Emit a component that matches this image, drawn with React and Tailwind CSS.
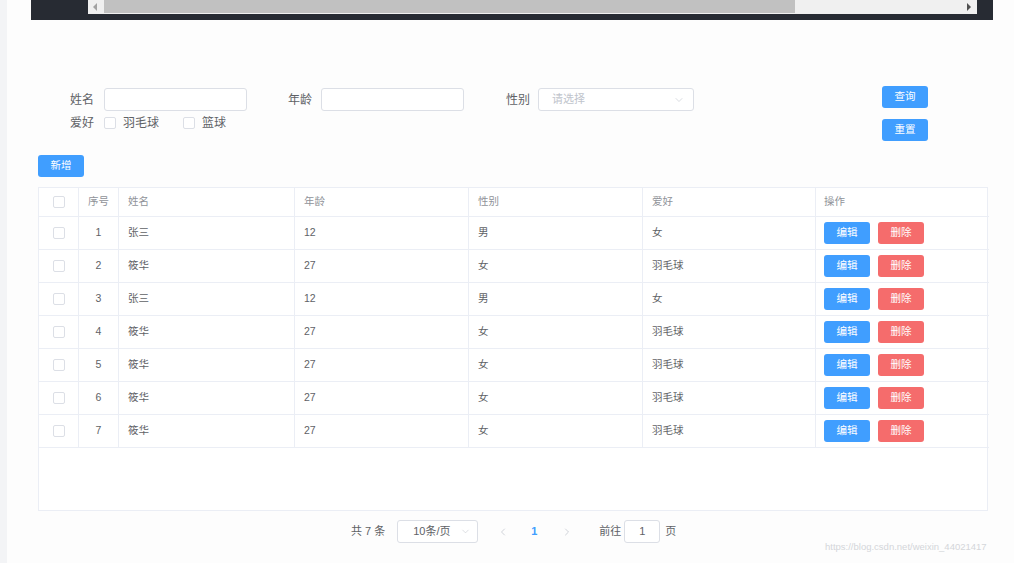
import React from "react";
import { ChevronDown, ChevronLeft, ChevronRight } from "lucide-react";

const FONT = { fontFamily: '"Liberation Sans", "Noto Sans CJK SC", sans-serif' };

const rows = [
  { id: 1, name: "张三", age: 12, sex: "男", hobby: "女" },
  { id: 2, name: "筱华", age: 27, sex: "女", hobby: "羽毛球" },
  { id: 3, name: "张三", age: 12, sex: "男", hobby: "女" },
  { id: 4, name: "筱华", age: 27, sex: "女", hobby: "羽毛球" },
  { id: 5, name: "筱华", age: 27, sex: "女", hobby: "羽毛球" },
  { id: 6, name: "筱华", age: 27, sex: "女", hobby: "羽毛球" },
  { id: 7, name: "筱华", age: 27, sex: "女", hobby: "羽毛球" },
];

function Box() {
  return <span className="block w-[12px] h-[12px] border border-[#dcdfe6] rounded-[2px] bg-white" />;
}

const GRID = "grid grid-cols-[40px_40px_176px_174px_174px_173px_173px]";

export default function App() {
  return (
    <div className="w-[1014px] h-[563px] bg-[#fdfdfd] flex overflow-hidden" style={FONT}>
      <div className="w-[7px] h-full bg-[#f3f4f6]" />
      <div className="flex-1 relative">
        {/* top dark bar with scrollbar */}
        <div className="ml-[24px] w-[962px] h-[20px] bg-[#272b33]">
          <div className="ml-[57px] w-[889px] h-[14px] bg-[#f0f0f0] flex items-center relative">
            <span className="absolute left-[5px] top-[3px] w-0 h-0 border-y-[4px] border-y-transparent border-r-[4px] border-r-[#a3a3a3]" />
            <div className="ml-[16px] w-[691px] h-[13px] self-start bg-[#c1c1c1]" />
            <span className="absolute right-[6px] top-[3px] w-0 h-0 border-y-[4px] border-y-transparent border-l-[4px] border-l-[#505050]" />
          </div>
        </div>

        {/* search form */}
        <div className="flex items-start mt-[66px]">
          <div className="pl-[63px] pt-[2px]">
            <div className="flex items-center h-[23px] text-[12px] text-[#606266]">
              <span className="w-[34px]">姓名</span>
              <div className="w-[143px] h-[23px] border border-[#dcdfe6] rounded-[3px] bg-white" />
              <span className="ml-[41px] w-[33px]">年龄</span>
              <div className="w-[143px] h-[23px] border border-[#dcdfe6] rounded-[3px] bg-white" />
              <span className="ml-[42px] w-[32px]">性别</span>
              <div className="w-[156px] h-[23px] border border-[#dcdfe6] rounded-[3px] bg-white flex items-center justify-between pl-[13px] pr-[8px]">
                <span className="text-[11px] text-[#c0c4cc]">请选择</span>
                <ChevronDown size={12} strokeWidth={1.2} color="#c0c4cc" />
              </div>
            </div>
            <div className="flex items-center h-[14px] mt-[5px] text-[12px] text-[#606266]">
              <span className="w-[34px]">爱好</span>
              <Box />
              <span className="ml-[7px]">羽毛球</span>
              <span className="ml-[24px]"><Box /></span>
              <span className="ml-[7px]">篮球</span>
            </div>
          </div>
          <div className="ml-[188px] flex flex-col gap-[11px]">
            <button className="w-[46px] h-[22px] bg-[#409eff] text-white text-[10.5px] rounded-[3px]">查询</button>
            <button className="w-[46px] h-[22px] bg-[#409eff] text-white text-[10.5px] rounded-[3px]">重置</button>
          </div>
        </div>

        {/* add button */}
        <div className="flex ml-[31px] mt-[14px]">
          <button className="w-[46px] h-[22px] bg-[#409eff] text-white text-[10.5px] rounded-[3px]">新增</button>
        </div>

        {/* table */}
        <div className="ml-[31px] mt-[10px] w-[950px] h-[324px] border border-[#ebeef5] bg-white text-[10.5px]">
          <div className={`${GRID} h-[29px] text-[#909399]`}>
            <div className="border-r border-b border-[#ebeef5] flex items-center justify-center"><Box /></div>
            <div className="border-r border-b border-[#ebeef5] flex items-center justify-center">序号</div>
            <div className="border-r border-b border-[#ebeef5] flex items-center pl-[9px]">姓名</div>
            <div className="border-r border-b border-[#ebeef5] flex items-center pl-[9px]">年龄</div>
            <div className="border-r border-b border-[#ebeef5] flex items-center pl-[9px]">性别</div>
            <div className="border-r border-b border-[#ebeef5] flex items-center pl-[9px]">爱好</div>
            <div className="border-b border-[#ebeef5] flex items-center pl-[8px]">操作</div>
          </div>
          {rows.map((r) => (
            <div key={r.id} className={`${GRID} h-[33px] text-[#606266]`}>
              <div className="border-r border-b border-[#ebeef5] flex items-center justify-center"><Box /></div>
              <div className="border-r border-b border-[#ebeef5] flex items-center justify-center">{r.id}</div>
              <div className="border-r border-b border-[#ebeef5] flex items-center pl-[9px]">{r.name}</div>
              <div className="border-r border-b border-[#ebeef5] flex items-center pl-[9px]">{r.age}</div>
              <div className="border-r border-b border-[#ebeef5] flex items-center pl-[9px]">{r.sex}</div>
              <div className="border-r border-b border-[#ebeef5] flex items-center pl-[9px]">{r.hobby}</div>
              <div className="border-b border-[#ebeef5] flex items-center pl-[8px] gap-[8px]">
                <button className="w-[46px] h-[22px] bg-[#409eff] text-white text-[10.5px] rounded-[3px]">编辑</button>
                <button className="w-[46px] h-[22px] bg-[#f56c6c] text-white text-[10.5px] rounded-[3px]">删除</button>
              </div>
            </div>
          ))}
        </div>

        {/* pagination */}
        <div className="flex items-center h-[23px] mt-[9px] ml-[344px] text-[11px] text-[#606266]">
          <span>共 7 条</span>
          <div className="ml-[12px] w-[81px] h-[23px] border border-[#dcdfe6] rounded-[3px] bg-white flex items-center justify-between pl-[15px] pr-[6px]">
            <span>10条/页</span>
            <ChevronDown size={11} strokeWidth={1.2} color="#c0c4cc" />
          </div>
          <ChevronLeft className="ml-[19px]" size={12} strokeWidth={1.5} color="#c0c4cc" />
          <span className="ml-[22px] text-[#409eff] font-bold">1</span>
          <ChevronRight className="ml-[24px]" size={12} strokeWidth={1.5} color="#c0c4cc" />
          <span className="ml-[26px]">前往</span>
          <div className="ml-[3px] w-[36px] h-[23px] border border-[#dcdfe6] rounded-[3px] bg-white flex items-center justify-center">1</div>
          <span className="ml-[5px]">页</span>
        </div>

        <div className="absolute left-[818px] top-[540px] text-[9.5px] text-[#d4d6da]">https://blog.csdn.net/weixin_44021417</div>
      </div>
    </div>
  );
}
